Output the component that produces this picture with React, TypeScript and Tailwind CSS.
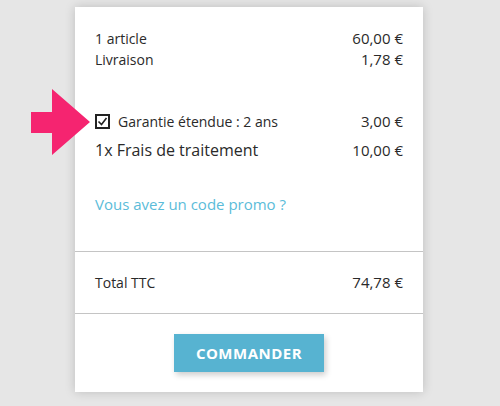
export default function App() {
  return (
    <div
      className="relative w-[500px] h-[406px] bg-[#e6e6e6] overflow-hidden"
      style={{ fontFamily: '"Open Sans", "Noto Sans", sans-serif' }}
    >
      <div className="absolute left-[75px] top-[7px] w-[348px] bg-white shadow-[0_0_10px_rgba(0,0,0,0.18)] text-[#2a2a2a]">
        <div className="px-5 pt-[21px]">
          <div className="flex justify-between items-center text-[14px] leading-[21px]">
            <span>1 article</span>
            <span className="text-[15px]">60,00 €</span>
          </div>
          <div className="flex justify-between items-center text-[14px] leading-[21px]">
            <span>Livraison</span>
            <span className="text-[15px]">1,78 €</span>
          </div>
          <div className="mt-[41px] flex justify-between items-center text-[14px] leading-[21px]">
            <span className="flex items-center">
              <span className="w-[15px] h-[15px] border-2 border-[#222] flex items-center justify-center mr-[8px]">
                <svg width="11" height="11" viewBox="0 0 11 11" fill="none">
                  <path d="M1.5 5.5 L4.5 8.5 L9.5 2" stroke="#222" strokeWidth="1.6" />
                </svg>
              </span>
              <span>Garantie étendue : 2 ans</span>
            </span>
            <span className="text-[15px]">3,00 €</span>
          </div>
          <div className="mt-[6px] flex justify-between items-center leading-[24px]">
            <span className="text-[16px]">1x Frais de traitement</span>
            <span className="text-[15px]">10,00 €</span>
          </div>
          <div className="mt-[31px] text-[15px] leading-[22px] text-[#5bbcd9]">
            Vous avez un code promo ?
          </div>
        </div>
        <div className="mt-[36px] border-t border-[#c4c4c4]"></div>
        <div className="px-5 py-[20px] flex justify-between items-center text-[14px] leading-[21px]">
          <span>Total TTC</span>
          <span className="text-[15px]">74,78 €</span>
        </div>
        <div className="border-t border-[#c4c4c4]"></div>
        <div className="flex justify-center pt-[20px] pb-[20px]">
          <button className="w-[150px] h-[38px] bg-[#57b3d1] text-white font-bold text-[15px] tracking-[0.5px] shadow-[2px_3px_6px_rgba(0,0,0,0.2)]">
            COMMANDER
          </button>
        </div>
      </div>
      <svg className="absolute left-0 top-0" width="120" height="200" viewBox="0 0 120 200">
        <polygon points="31,112 52,112 52,89 90,122 52,155 52,133 31,133" fill="#f52470" />
      </svg>
    </div>
  );
}
